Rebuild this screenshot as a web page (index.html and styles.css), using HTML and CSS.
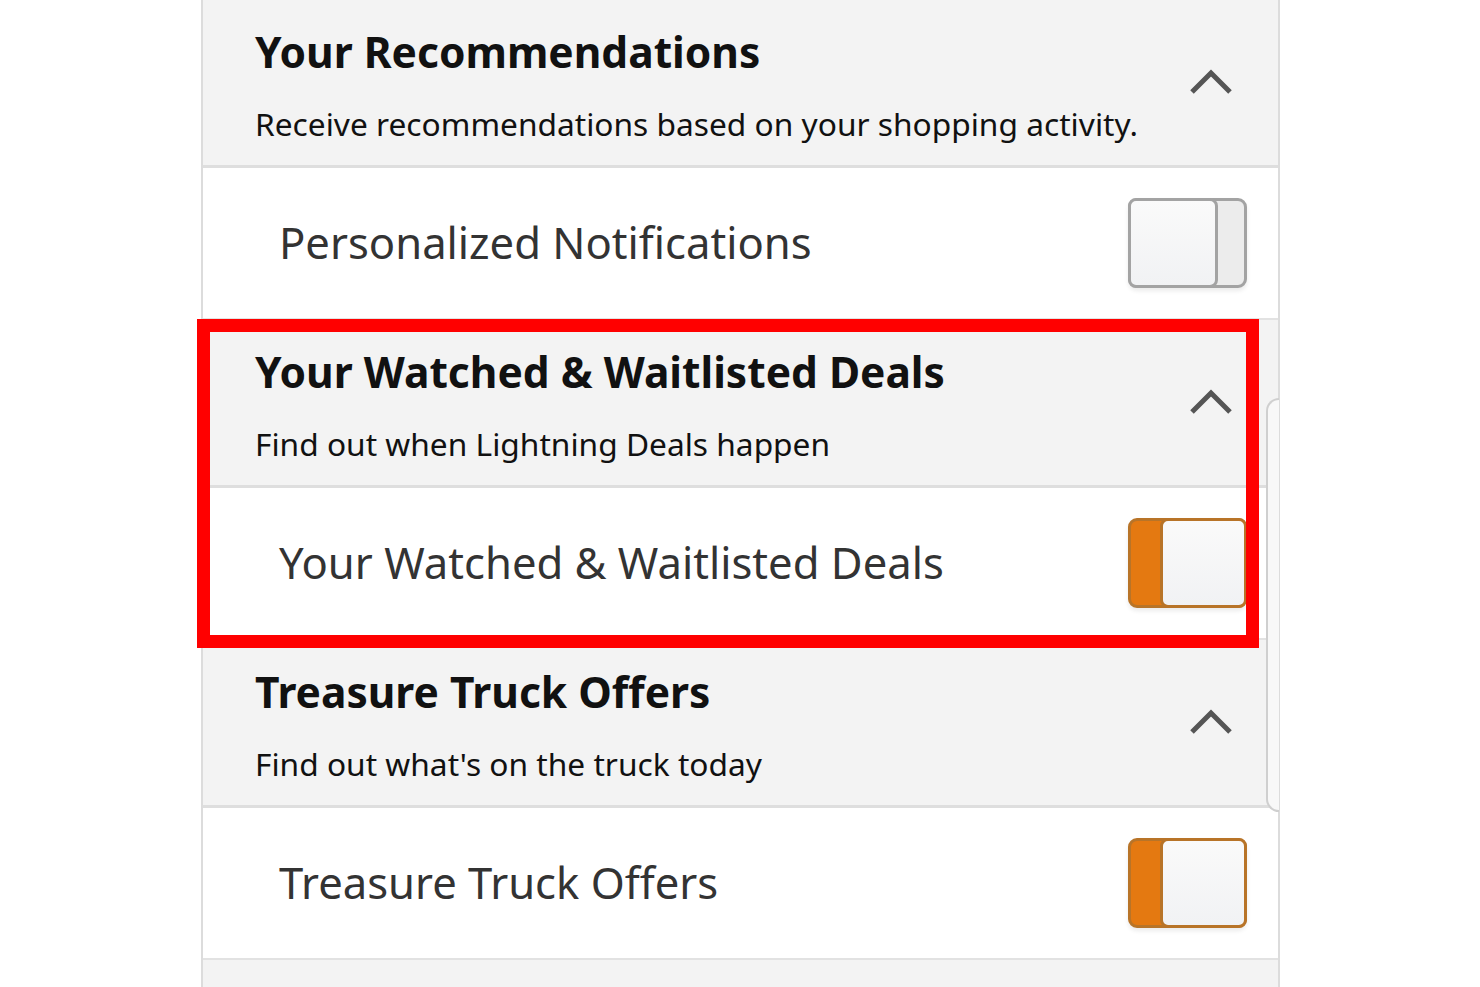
FILE: index.html
```html
<!DOCTYPE html>
<html>
<head>
<meta charset="utf-8">
<link rel="stylesheet" href="styles.css">
</head>
<body>
<div class="page">
  <div class="panel">
    <div class="header">
      <div class="htext">
        <div class="title">Your Recommendations</div>
        <div class="sub">Receive recommendations based on your shopping activity.</div>
      </div>
      <svg class="chev" width="44" height="28" viewBox="0 0 44 28"><polyline points="3,25 22,6 41,25" fill="none" stroke="#555" stroke-width="5"/></svg>
    </div>
    <div class="row">
      <div class="label">Personalized Notifications</div>
      <div class="toggle off"><div class="knob"></div></div>
    </div>
    <div class="header">
      <div class="htext">
        <div class="title">Your Watched &amp; Waitlisted Deals</div>
        <div class="sub">Find out when Lightning Deals happen</div>
      </div>
      <svg class="chev" width="44" height="28" viewBox="0 0 44 28"><polyline points="3,25 22,6 41,25" fill="none" stroke="#555" stroke-width="5"/></svg>
    </div>
    <div class="row">
      <div class="label">Your Watched &amp; Waitlisted Deals</div>
      <div class="toggle on"><div class="knob"></div></div>
    </div>
    <div class="header">
      <div class="htext">
        <div class="title">Treasure Truck Offers</div>
        <div class="sub">Find out what's on the truck today</div>
      </div>
      <svg class="chev" width="44" height="28" viewBox="0 0 44 28"><polyline points="3,25 22,6 41,25" fill="none" stroke="#555" stroke-width="5"/></svg>
    </div>
    <div class="row">
      <div class="label">Treasure Truck Offers</div>
      <div class="toggle on"><div class="knob"></div></div>
    </div>
    <div class="header"></div>
  </div>
  <div class="sidetab"></div>
  <div class="highlight"></div>
</div>
</body>
</html>
```
FILE: styles.css
```css
html, body {
  margin: 0;
  padding: 0;
  background: #fff;
  overflow: hidden;
}
body {
  width: 1480px;
  height: 987px;
  font-family: "Noto Sans", "Open Sans", sans-serif;
}
.page {
  position: relative;
  width: 1480px;
  height: 987px;
  overflow: hidden;
}
.panel {
  margin-left: 201px;
  width: 1075px;
  border-left: 2px solid #dcdcdc;
  border-right: 2px solid #dcdcdc;
  display: flex;
  flex-direction: column;
}
.header {
  flex: none;
  background: #f3f3f3;
  border-bottom: 3px solid #dedede;
  box-sizing: border-box;
  height: 168px;
  display: flex;
  align-items: center;
  justify-content: space-between;
  padding-left: 52px;
  padding-right: 45px;
}
.htext {
  display: flex;
  flex-direction: column;
  gap: 26px;
  padding-top: 4px;
}
.title {
  font-size: 42.5px;
  font-weight: 700;
  color: #111;
  line-height: 52px;
}
.sub {
  font-size: 31.7px;
  color: #111;
  line-height: 40px;
}
.chev {
  display: block;
  margin-top: -4px;
}
.row {
  flex: none;
  box-sizing: border-box;
  height: 152px;
  background: #fff;
  border-bottom: 2px solid #e2e2e2;
  display: flex;
  align-items: center;
  justify-content: space-between;
  padding-left: 76px;
  padding-right: 31px;
}
.label {
  font-size: 43.6px;
  color: #333;
  line-height: 56px;
  margin-top: -2px;
}
.toggle {
  position: relative;
  box-sizing: border-box;
  width: 119px;
  height: 90px;
  border-radius: 9px;
  display: flex;
  box-shadow: 0 3px 4px rgba(0,0,0,0.08);
}
.toggle.off {
  background: #ececec;
  border: 3px solid #a3a3a3;
  justify-content: flex-start;
}
.toggle.on {
  background: #e47911;
  border: 3px solid #b87428;
  justify-content: flex-end;
}
.knob {
  box-sizing: border-box;
  height: 90px;
  margin: -3px;
  border-radius: 8px;
  background: linear-gradient(#fafafa, #f1f2f4);
}
.toggle.off .knob {
  width: 90px;
  border: 3px solid #a3a3a3;
}
.toggle.on .knob {
  width: 87px;
  border: 3px solid #b87428;
}
.sidetab {
  position: absolute;
  left: 1266px;
  top: 398px;
  width: 13px;
  height: 414px;
  box-sizing: border-box;
  border: 2px solid #cfcfcf;
  border-right: none;
  border-radius: 14px 0 0 14px;
  background: #f8f8f8;
}
.highlight {
  position: absolute;
  left: 197px;
  top: 319px;
  width: 1062px;
  height: 329px;
  box-sizing: border-box;
  border: 13px solid #ff0000;
}
```
